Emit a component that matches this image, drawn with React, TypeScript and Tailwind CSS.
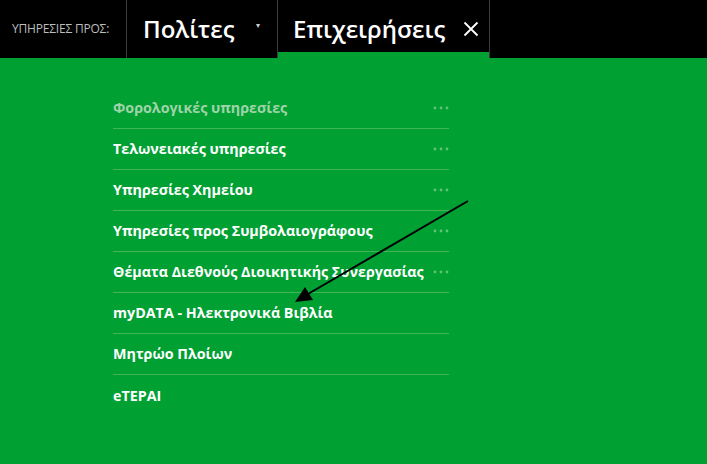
import React from 'react';

const items = [
  { label: 'Φορολογικές υπηρεσίες', more: true, muted: true },
  { label: 'Τελωνειακές υπηρεσίες', more: true },
  { label: 'Υπηρεσίες Χημείου', more: true },
  { label: 'Υπηρεσίες προς Συμβολαιογράφους', more: true },
  { label: 'Θέματα Διεθνούς Διοικητικής Συνεργασίας', more: true },
  { label: 'myDATA - Ηλεκτρονικά Βιβλία' },
  { label: 'Μητρώο Πλοίων' },
  { label: 'eTEPAI' },
];

function Dots() {
  return (
    <svg width="16" height="4" viewBox="0 0 16 4" className="shrink-0">
      <circle cx="2" cy="2" r="1.4" fill="#5fc472" />
      <circle cx="8" cy="2" r="1.4" fill="#5fc472" />
      <circle cx="14" cy="2" r="1.4" fill="#5fc472" />
    </svg>
  );
}

export default function App() {
  return (
    <div
      className="relative w-[707px] h-[464px] bg-[#00a033] overflow-hidden"
      style={{ fontFamily: '"Open Sans", "Noto Sans", sans-serif' }}
    >
      <header className="flex items-stretch h-[58px] bg-black">
        <div className="flex items-center w-[127px] pl-[12px] border-r border-[#3a3a3a] text-[12px] text-[#bdbdbd] tracking-[-0.2px]">
          ΥΠΗΡΕΣΙΕΣ ΠΡΟΣ:
        </div>
        <div className="flex items-center pl-[16px] pr-[17px] w-[151px] border-r border-[#3a3a3a] text-white">
          <span className="text-[24px] font-semibold leading-none">Πολίτες</span>
          <span className="ml-auto text-[8px] text-[#cfcfcf] -mt-[8px]">▾</span>
        </div>
        <div className="flex items-center pl-[15px] pr-[10px] pt-[6px] w-[211px] border-b-[6px] border-[#00a033] text-white">
          <span className="text-[24px] font-semibold leading-none">Επιχειρήσεις</span>
          <svg width="16" height="16" viewBox="0 0 16 16" className="ml-auto">
            <path d="M1.5 1.5 L14.5 14.5 M14.5 1.5 L1.5 14.5" stroke="#fff" strokeWidth="1.8" />
          </svg>
        </div>
        <div className="w-px bg-[#3a3a3a]" />
      </header>

      <ul className="ml-[113px] w-[336px] pt-[30px]">
        {items.map((it, i) => (
          <li
            key={it.label}
            className={`flex items-center justify-between h-[41px] ${
              i < items.length - 1 ? 'border-b border-[#3fb556]' : ''
            }`}
          >
            <span
              className={`text-[14.3px] font-bold ${it.muted ? 'text-[#9fd4a8]' : 'text-white'}`}
            >
              {it.label}
            </span>
            {it.more && <Dots />}
          </li>
        ))}
      </ul>

      <svg className="absolute left-0 top-0 pointer-events-none" width="707" height="464">
        <line x1="468" y1="201" x2="308" y2="294" stroke="#000" strokeWidth="2" />
        <polygon points="295,302 305,287 313,300" fill="#000" />
      </svg>
    </div>
  );
}
